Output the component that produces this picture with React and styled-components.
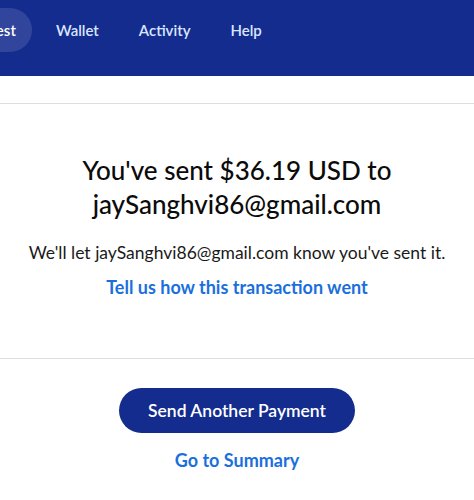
import React from "react";
import styled, { createGlobalStyle } from "styled-components";

const GlobalStyle = createGlobalStyle`
  html, body {
    margin: 0;
    padding: 0;
    background: #ffffff;
  }
  body {
    font-family: Lato, "Noto Sans", "Liberation Sans", sans-serif;
    color: #001435;
    overflow: hidden;
  }
`;

const NavBar = styled.header`
  height: 76px;
  background: #142c8e;
  display: flex;
  align-items: center;
  overflow: hidden;
`;

const NavList = styled.nav`
  display: flex;
  align-items: center;
  gap: 8px;
  margin-left: -54px;
  margin-top: -16px;
`;

const NavItem = styled.a`
  display: flex;
  align-items: center;
  height: 44px;
  padding: 0 16px;
  border-radius: 22px;
  font-size: 15px;
  font-weight: 600;
  color: ${(p) => (p.$active ? "#ffffff" : "#dbe6ff")};
  background: ${(p) => (p.$active ? "rgba(255, 255, 255, 0.12)" : "transparent")};
  white-space: nowrap;
`;

const Divider = styled.hr`
  margin: 0;
  border: 0;
  border-top: 1px solid #dedede;
`;

const Main = styled.main`
  padding-top: 27px;
`;

const Summary = styled.section`
  display: flex;
  flex-direction: column;
  align-items: center;
  text-align: center;
  padding: 49px 8px 59px;
`;

const Heading = styled.h1`
  margin: 0;
  font-size: 26px;
  line-height: 34px;
  font-weight: 500;
  color: #0b0b0b;
  max-width: 320px;
`;

const Note = styled.p`
  margin: 20px 0 0;
  font-size: 17.5px;
  line-height: 24px;
  color: #1a1a1a;
  white-space: nowrap;
`;

const TextLink = styled.a`
  display: block;
  font-size: 18px;
  line-height: 24px;
  font-weight: 700;
  color: #1b6fdc;
  margin-top: ${(p) => p.$top || 0}px;
`;

const Actions = styled.div`
  display: flex;
  flex-direction: column;
  align-items: center;
  padding-top: 29px;
`;

const PrimaryButton = styled.button`
  height: 45px;
  padding: 0 29px;
  border: 0;
  border-radius: 23px;
  background: #142c8e;
  color: #ffffff;
  font-family: inherit;
  font-size: 17.5px;
  font-weight: 600;
`;

export default function App() {
  return (
    <>
      <GlobalStyle />
      <NavBar>
        <NavList>
          <NavItem $active>Request</NavItem>
          <NavItem>Wallet</NavItem>
          <NavItem>Activity</NavItem>
          <NavItem>Help</NavItem>
        </NavList>
      </NavBar>
      <Main>
        <Divider />
        <Summary>
          <Heading>You've sent $36.19 USD to jaySanghvi86@gmail.com</Heading>
          <Note>We'll let jaySanghvi86@gmail.com know you've sent it.</Note>
          <TextLink $top={10}>Tell us how this transaction went</TextLink>
        </Summary>
        <Divider />
        <Actions>
          <PrimaryButton>Send Another Payment</PrimaryButton>
          <TextLink $top={15}>Go to Summary</TextLink>
        </Actions>
      </Main>
    </>
  );
}
